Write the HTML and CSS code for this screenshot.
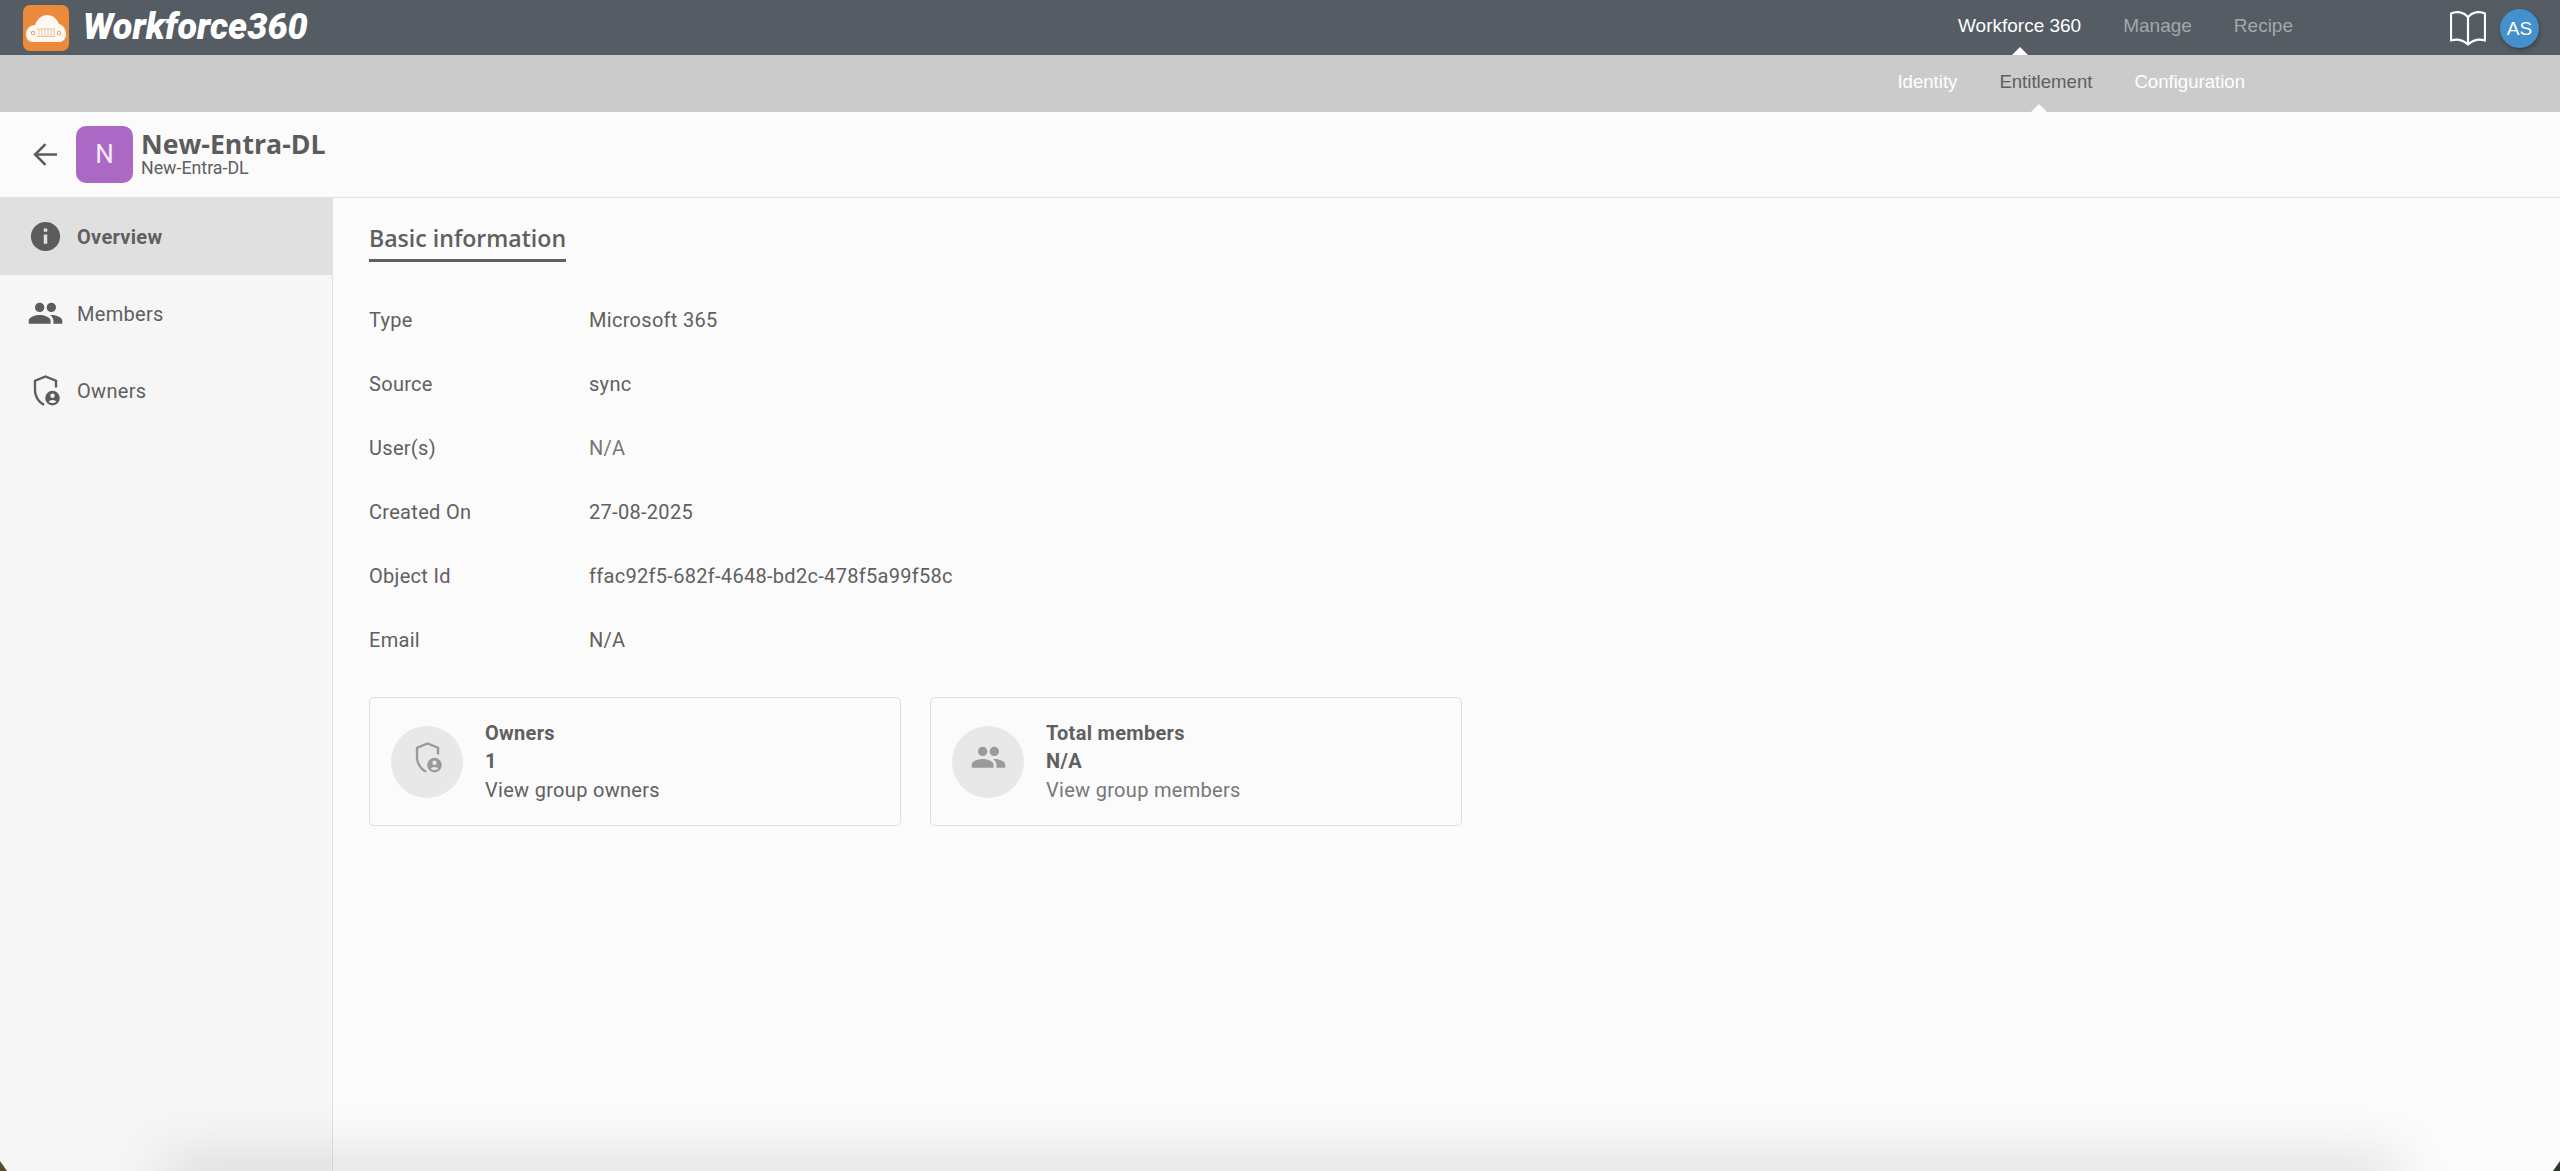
FILE: index.html
```html
<!DOCTYPE html>
<html lang="en">
<head>
<meta charset="utf-8">
<title>Workforce360</title>
<link rel="stylesheet" href="styles.css">
</head>
<body>
<div class="app">
  <header class="topbar">
    <div class="brand">
      <svg class="logo" viewBox="0 0 46 46" aria-hidden="true">
        <rect width="46" height="46" rx="7" fill="#ec8a3b"/>
        <path d="M10 37C5 37 3 33 3 29c0-5 4-9 9-9 2-6 7-10 12-10 6 0 10 4 12 9 4 1 7 5 7 10 0 5-3 8-7 8z" fill="#fdf8f1"/>
        <g fill="none" stroke="#e9b98e" stroke-width=".8">
          <path d="M14 24h18M14 31.500h18M16 24v7.500M19 24v7.500M22 24v7.500M25 24v7.500M28 24v7.500M31 24v7.500"/>
        </g>
        <circle cx="10" cy="28" r="1.800" fill="none" stroke="#dfa06c" stroke-width="1"/>
        <circle cx="36" cy="28" r="1.800" fill="none" stroke="#dfa06c" stroke-width="1"/>
      </svg>
      <span class="brand-name">Workforce360</span>
    </div>
    <nav class="main-nav">
      <a class="main-link is-current">Workforce 360</a>
      <a class="main-link">Manage</a>
      <a class="main-link">Recipe</a>
    </nav>
    <div class="top-actions">
      <svg class="book" viewBox="0 0 36 36" aria-hidden="true">
        <path d="M18 7C14 2.500 7 .500 1 3.500V30.500C7 28.500 13 30 18 34.500 23 30 29 28.500 35 30.500V3.500C29 .500 22 2.500 18 7zM18 7V34.500" fill="none" stroke="#fff" stroke-width="2.200" stroke-linejoin="round"/>
      </svg>
      <span class="avatar">AS</span>
    </div>
  </header>

  <div class="subbar">
    <nav class="sub-nav">
      <a class="sub-link">Identity</a>
      <a class="sub-link is-current">Entitlement</a>
      <a class="sub-link">Configuration</a>
    </nav>
  </div>

  <div class="page-head">
    <svg class="back" viewBox="0 0 24 24" aria-hidden="true">
      <path d="M23 12H2M12 2 2 12l10 10" fill="none" stroke="#5b5b5b" stroke-width="2.400"/>
    </svg>
    <span class="tile">N</span>
    <div class="head-text">
      <div class="head-title">New-Entra-DL</div>
      <div class="head-sub">New-Entra-DL</div>
    </div>
  </div>

  <div class="body-row">
    <aside class="sidebar">
      <a class="side-item is-active">
        <svg class="side-icon" viewBox="0 0 24 24" aria-hidden="true"><path d="M12 2a10 10 0 1 0 0 20 10 10 0 0 0 0-20zm1.200 15h-2.400v-6.400h2.400zm0-8.200h-2.400V6.500h2.400z"/></svg>
        Overview
      </a>
      <a class="side-item">
        <svg class="side-icon" viewBox="0 0 24 24" aria-hidden="true"><path d="M16 11a3.200 3.200 0 1 0 0-6.400 3.200 3.200 0 0 0 0 6.400zm-8 0a3.200 3.200 0 1 0 0-6.400A3.200 3.200 0 0 0 8 11zm0 2c-2.600 0-7.500 1.300-7.500 3.900V19h15v-2.100C15.500 14.300 10.600 13 8 13zm8 0h-.9c1.300.900 2.300 2.200 2.300 3.900V19h6.100v-2.100c0-2.600-4.900-3.900-7.500-3.900z"/></svg>
        Members
      </a>
      <a class="side-item">
        <svg class="side-icon" viewBox="0 0 24 24" aria-hidden="true"><path d="M12 1.500 4 4.800v6.700c0 4.900 2.800 9.200 6.800 11l.6-1.500c-3.300-1.500-5.800-5.200-5.800-9.500V5.900L12 3.200l6.400 2.700V10H20V4.800z"/><path d="M16.800 12.200a5 5 0 1 0 0 10 5 5 0 0 0 0-10zm0 1.900a1.500 1.500 0 1 1 0 3 1.500 1.500 0 0 1 0-3zm0 6.700c-1 0-1.900-.5-2.600-1.200.3-.6 1.500-1.100 2.600-1.100s2.300.5 2.600 1.100c-.7.700-1.600 1.200-2.600 1.200z"/></svg>
        Owners
      </a>
    </aside>

    <main class="content">
      <h2 class="section-title">Basic information</h2>
      <dl class="facts">
        <div class="fact"><dt>Type</dt><dd>Microsoft 365</dd></div>
        <div class="fact"><dt>Source</dt><dd>sync</dd></div>
        <div class="fact"><dt>User(s)</dt><dd class="is-empty">N/A</dd></div>
        <div class="fact"><dt>Created On</dt><dd>27-08-2025</dd></div>
        <div class="fact"><dt>Object Id</dt><dd>ffac92f5-682f-4648-bd2c-478f5a99f58c</dd></div>
        <div class="fact"><dt>Email</dt><dd>N/A</dd></div>
      </dl>
      <div class="cards">
        <section class="card">
          <span class="card-icon">
            <svg viewBox="0 0 24 24" aria-hidden="true"><path d="M12 1.500 4 4.800v6.700c0 4.900 2.800 9.200 6.800 11l.6-1.500c-3.300-1.500-5.800-5.200-5.800-9.500V5.900L12 3.200l6.400 2.700V10H20V4.800z"/><path d="M16.800 12.200a5 5 0 1 0 0 10 5 5 0 0 0 0-10zm0 1.900a1.500 1.500 0 1 1 0 3 1.500 1.500 0 0 1 0-3zm0 6.700c-1 0-1.900-.5-2.600-1.200.3-.6 1.500-1.100 2.600-1.100s2.300.5 2.600 1.100c-.7.700-1.600 1.200-2.600 1.200z"/></svg>
          </span>
          <div class="card-text">
            <div class="card-title">Owners</div>
            <div class="card-value">1</div>
            <div class="card-link">View group owners</div>
          </div>
        </section>
        <section class="card">
          <span class="card-icon">
            <svg viewBox="0 0 24 24" aria-hidden="true"><path d="M16 11a3.200 3.200 0 1 0 0-6.400 3.200 3.200 0 0 0 0 6.400zm-8 0a3.200 3.200 0 1 0 0-6.400A3.200 3.200 0 0 0 8 11zm0 2c-2.600 0-7.500 1.300-7.500 3.900V19h15v-2.100C15.500 14.300 10.600 13 8 13zm8 0h-.9c1.300.900 2.300 2.200 2.300 3.900V19h6.100v-2.100c0-2.600-4.900-3.900-7.500-3.900z"/></svg>
          </span>
          <div class="card-text">
            <div class="card-title">Total members</div>
            <div class="card-value">N/A</div>
            <div class="card-link is-muted">View group members</div>
          </div>
        </section>
      </div>
    </main>
  </div>
  <div class="bottom-shadow"></div>
  <div class="corner corner-left"></div>
  <div class="corner corner-right"></div>
</div>
</body>
</html>
```

FILE: styles.css
```css
* { box-sizing: border-box; }
html, body { margin: 0; height: 100%; overflow: hidden; }
body { font-family: Roboto, "Liberation Sans", sans-serif; color: #606060; background: #fbfbfb; }

.app { position: relative; height: 100vh; display: flex; flex-direction: column; overflow: hidden; }

.topbar { height: 55px; flex: none; background: #555c64; display: flex; align-items: center; padding-left: 23px; }
.brand { display: flex; align-items: center; gap: 14px; }
.logo { width: 46px; height: 46px; display: block; }
.brand-name { font: italic 900 36px/1 Roboto, sans-serif; color: #fff; margin-top: -2px; }
.main-nav { margin-left: auto; display: flex; gap: 42px; }
.main-link { position: relative; font: 400 19px/52px "Liberation Sans", sans-serif; color: #a4a8ac; height: 55px; }
.main-link.is-current { color: #fff; }
.main-link.is-current::after { content: ""; position: absolute; left: 50%; bottom: 0; margin-left: -8px; border: 8px solid transparent; border-top: 0; border-bottom-color: #fff; }
.top-actions { display: flex; align-items: center; margin-left: 155px; margin-right: 21px; gap: 14px; }
.book { width: 36px; height: 36px; display: block; margin-left: 2px; }
.avatar { width: 39px; height: 39px; border-radius: 50%; background: #4490cd; color: #fff; font: 400 19px/39px "Liberation Sans", sans-serif; text-align: center; box-shadow: 1px 2px 4px rgba(0,0,0,.3); margin-top: 2px; }

.subbar { height: 57px; flex: none; background: #cbcbcb; display: flex; justify-content: flex-end; padding-right: 315px; }
.sub-nav { display: flex; gap: 42px; }
.sub-link { position: relative; font: 400 18.600px/54px "Liberation Sans", sans-serif; color: #fff; height: 57px; }
.sub-link.is-current { color: #606060; }
.sub-link.is-current::after { content: ""; position: absolute; left: calc(50% - 7px); bottom: 0; margin-left: -8px; border: 8px solid transparent; border-top: 0; border-bottom-color: #fbfbfb; }

.page-head { height: 86px; flex: none; background: #fbfbfb; border-bottom: 1px solid #e2e2e2; display: flex; align-items: center; padding-left: 33px; }
.back { width: 25px; height: 25px; display: block; }
.tile { margin-left: 18px; width: 57px; height: 57px; border-radius: 10px; background: #ab68c4; color: #f5ecf8; font: 400 26px/57px Roboto, sans-serif; text-align: center; }
.head-text { margin-left: 8px; padding-bottom: 3px; }
.head-title { font: 700 26.700px/30px "Open Sans", sans-serif; color: #5c5c5c; }
.head-sub { font: 400 17.800px/18px Roboto, sans-serif; color: #606060; }

.body-row { flex: 1; display: flex; min-height: 0; }
.sidebar { width: 333px; flex: none; background: #f6f6f6; border-right: 1px solid #e2e2e2; }
.side-item { height: 77px; display: flex; align-items: center; padding-left: 28px; gap: 14px; font-size: 20px; color: #606060; letter-spacing: .3px; }
.side-item.is-active { background: #e0e0e0; font-weight: 700; }
.side-icon { width: 35px; height: 35px; display: block; fill: #5c5c5c; flex: none; }

.content { flex: 1; padding: 23px 0 0 36px; }
.section-title { margin: 0; display: inline-block; font: 600 23.100px/34px "Open Sans", sans-serif; color: #606060; border-bottom: 3px solid #606060; padding-bottom: 4px; }
.facts { margin: 26px 0 0; }
.fact { height: 64px; display: flex; align-items: center; font-size: 20px; letter-spacing: .3px; }
.fact dt { width: 220px; flex: none; }
.fact dd { margin: 0; }
.fact dd.is-empty { color: #777; }

.cards { margin-top: 25px; display: flex; gap: 29px; }
.card { width: 532px; height: 129px; background: #fbfbfb; border: 1px solid #dedede; border-radius: 5px; display: flex; align-items: center; padding-left: 21px; gap: 22px; }
.card-icon { width: 72px; height: 72px; border-radius: 50%; background: #e8e8e8; display: flex; align-items: center; justify-content: center; flex: none; padding-bottom: 8px; }
.card-icon svg { width: 35px; height: 35px; fill: #9a9a9a; display: block; }
.card-text { font-size: 20px; line-height: 28.500px; letter-spacing: .3px; }
.card-title, .card-value { font-weight: 700; }
.card-link.is-muted { color: #777; }

.bottom-shadow { position: absolute; left: 170px; right: 170px; bottom: -12px; height: 12px; box-shadow: 0 0 55px 8px rgba(0,0,0,.18); pointer-events: none; }
.corner { position: absolute; bottom: 0; width: 7px; height: 10px; pointer-events: none; }
.corner-left { left: 0; background: #5a4a2a; clip-path: polygon(0 0, 100% 100%, 0 100%); }
.corner-right { right: 0; background: #2e3a28; clip-path: polygon(100% 0, 100% 100%, 0 100%); }
```
